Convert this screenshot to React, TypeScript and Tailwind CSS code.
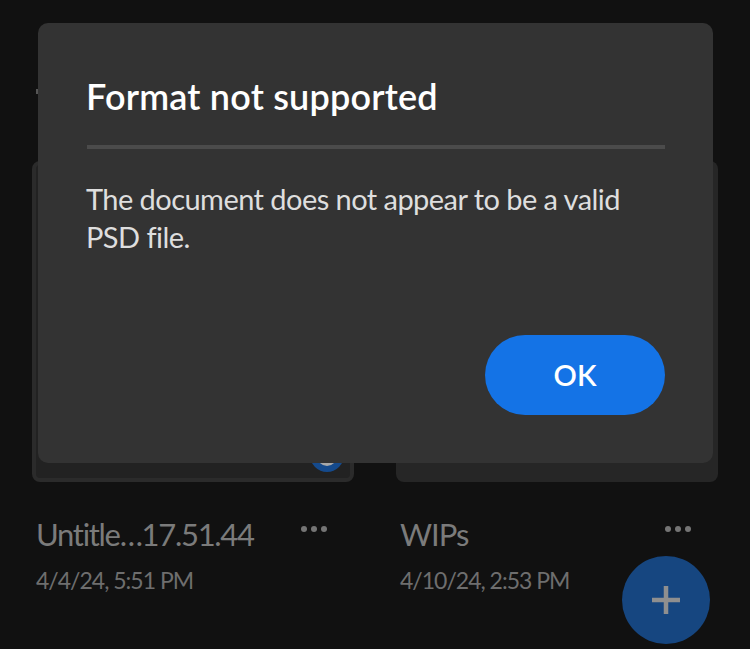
function Dots() {
  return (
    <div className="mt-[11px] flex gap-[4px]">
      <span className="h-[6px] w-[6px] rounded-full bg-[#757575]" />
      <span className="h-[6px] w-[6px] rounded-full bg-[#757575]" />
      <span className="h-[6px] w-[6px] rounded-full bg-[#757575]" />
    </div>
  );
}

export default function App() {
  return (
    <div className="relative h-[649px] w-[750px] overflow-hidden bg-[#111111] font-['Lato','Noto_Sans',sans-serif]">
      <div className="absolute left-[36px] top-[89px] h-[5px] w-[2px] bg-[#555555]" />
      <div className="grid grid-cols-[322px_322px] gap-x-[42px] pl-[32px] pt-[161px]">
        <div>
          <div className="relative h-[321px] rounded-[8px] border-[4px] border-[#2b2b2b] bg-[#222222]">
            <div className="absolute bottom-[6px] right-[6px] h-[34px] w-[34px] rounded-full bg-[#154a8c]">
              <div className="mx-auto mt-[8px] h-[20px] w-[20px] rounded-full bg-[#a8a8a8]" />
            </div>
          </div>
          <div className="flex items-start justify-between pl-[4px] pr-[27px] pt-[32px]">
            <div className="text-[31px] leading-[40px] tracking-[-1.3px] text-[#7b7b7b]">Untitle…17.51.44</div>
            <div className="pt-px"><Dots /></div>
          </div>
          <div className="pl-[4px] pt-[11px] text-[23px] leading-[30px] tracking-[-1px] text-[#6e6e6e]">4/4/24, 5:51 PM</div>
        </div>
        <div>
          <div className="h-[321px] rounded-[8px] bg-[#262626]" />
          <div className="flex items-start justify-between pl-[4px] pr-[27px] pt-[32px]">
            <div className="text-[31px] leading-[40px] tracking-[-1px] text-[#7b7b7b]">WIPs</div>
            <div className="pt-px"><Dots /></div>
          </div>
          <div className="pl-[4px] pt-[11px] text-[23px] leading-[30px] tracking-[-1px] text-[#6e6e6e]">4/10/24, 2:53 PM</div>
        </div>
      </div>

      <div className="absolute bottom-[5px] left-[622px] flex h-[88px] w-[88px] items-center justify-center rounded-full bg-[#164680]">
        <svg width="30" height="30" viewBox="0 0 30 30" fill="#8f8f8f">
          <rect x="12.75" y="1" width="4.5" height="28" />
          <rect x="1" y="12.75" width="28" height="4.5" />
        </svg>
      </div>

      <div className="absolute left-[38px] top-[23px] flex h-[440px] w-[675px] flex-col rounded-[10px] bg-[#333333] pl-[49px] pr-[48px]">
        <h1 className="-ml-px pt-[50px] text-[36px] font-semibold leading-[46px] tracking-[0.2px] text-white">Format not supported</h1>
        <div className="mt-[26px] h-[4px] bg-[#4b4b4b]" />
        <p className="-ml-px mt-[31px] text-[29px] leading-[38px] tracking-[-0.55px] text-[#dedede]">
          The document does not appear to be a valid PSD file.
        </p>
        <div className="mt-auto flex justify-end pb-[48px]">
          <button className="flex h-[80px] w-[180px] items-center justify-center rounded-full bg-[#1473e6] text-[29px] font-semibold text-white">
            OK
          </button>
        </div>
      </div>
    </div>
  );
}
